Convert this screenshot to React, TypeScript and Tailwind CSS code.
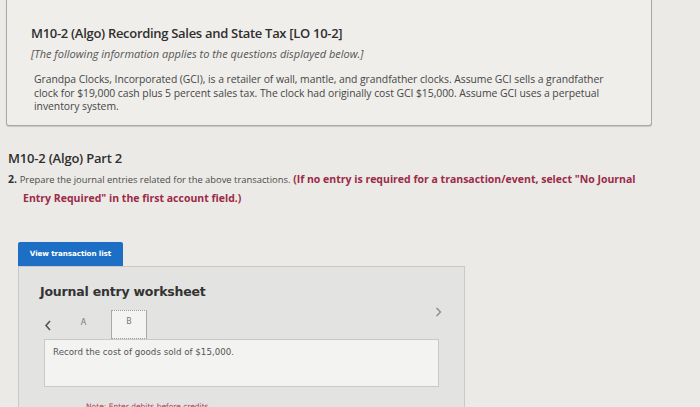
import React from "react";

const sans = "font-['Open_Sans','Liberation_Sans',sans-serif]";
const verdana = "font-['DejaVu_Sans','Liberation_Sans',sans-serif]";

const App: React.FC = () => {
  return (
    <div className={`w-[700px] h-[407px] overflow-hidden bg-[#ebeae7] text-[#3f3f3f] ${sans}`}>
      {/* intro box */}
      <div className="ml-[6px] w-[646px] h-[126px] border border-t-0 border-[#a8a8a6] rounded-b-[3px] bg-[#efeeeb] pl-[24px] pt-[24px] shadow-[0_1px_1px_rgba(0,0,0,0.15)]">
        <h1 className="text-[13px] leading-[18px] font-semibold text-[#2f2f2f] tracking-[-0.3px]">
          M10-2 (Algo) Recording Sales and State Tax [LO 10-2]
        </h1>
        <p className="mt-[5px] text-[11px] leading-[14px] italic text-[#555]">
          [The following information applies to the questions displayed below.]
        </p>
        <p className="mt-[12px] pl-[3px] text-[10.4px] leading-[13.5px] tracking-[-0.05px] text-[#464646] whitespace-nowrap">
          Grandpa Clocks, Incorporated (GCI), is a retailer of wall, mantle, and grandfather clocks. Assume GCI sells a grandfather
          <br />
          clock for $19,000 cash plus 5 percent sales tax. The clock had originally cost GCI $15,000. Assume GCI uses a perpetual
          <br />
          inventory system.
        </p>
      </div>

      {/* part 2 */}
      <div className="pl-[8px] pt-[24px]">
        <h2 className="text-[13px] leading-[16px] font-semibold text-[#2f2f2f] tracking-[-0.2px]">
          M10-2 (Algo) Part 2
        </h2>
        <div className="mt-[4px] text-[10.5px] leading-[18px] text-[#4a4a4a] whitespace-nowrap">
          <div>
            <span className="font-bold text-[#333]">2.</span>{" "}
            <span className="text-[9.4px]">Prepare the journal entries related for the above transactions.</span>{" "}
            <span className="font-bold text-[#9c2a48]">
              (If no entry is required for a transaction/event, select "No Journal
            </span>
          </div>
          <div className="pl-[15px] font-bold text-[#9c2a48]">Entry Required" in the first account field.)</div>
        </div>
      </div>

      {/* worksheet */}
      <div className="pl-[18px] pt-[31px]">
        <button className={`w-[105px] h-[24px] rounded-t-[2px] bg-[#1d6fc6] text-white text-[7.2px] font-bold tracking-[-0.1px] ${verdana}`}>
          View transaction list
        </button>
        <div className={`w-[447px] h-[160px] border border-[#c9c9c7] bg-[#e3e3e1] ${verdana}`}>
          <div className="pl-[21px] pt-[17px] text-[12.5px] leading-[16px] font-bold text-[#333] tracking-[-0.2px]">
            Journal entry worksheet
          </div>
          <div className="mt-[7px] ml-[25px] mr-[22px] flex items-end">
            <span className="w-[12px] pb-[8px] text-[#555]">
              <svg width="8" height="11" viewBox="0 0 8 11" fill="none" stroke="#555" strokeWidth="1.6">
                <path d="M6 1 L2 5.5 L6 10" />
              </svg>
            </span>
            <span className="w-[55px] pb-[10px] text-center text-[8px] text-[#777]">A</span>
            <span className="w-[36px] h-[29px] border border-dotted border-y-[#999] border-x-[#a9a9a9] [border-left-style:solid] [border-right-style:solid] bg-[#f4f4f2] text-center text-[8px] leading-[22px] text-[#777]">
              B
            </span>
            <span className="ml-auto mb-[22px]">
              <svg width="7" height="10" viewBox="0 0 7 10" fill="none" stroke="#888" strokeWidth="1.3">
                <path d="M1.5 1 L5.5 5 L1.5 9" />
              </svg>
            </span>
          </div>
          <div className="ml-[25px] w-[395px] h-[48px] border border-[#c9c9c7] bg-[#f3f3f1] pl-[8px] pt-[6px] text-[8.7px] leading-[12px] text-[#555]">
            Record the cost of goods sold of $15,000.
          </div>
          <div className="mt-[15px] pl-[67px] text-[7.5px] leading-[10px] text-[#b04050]">
            Note: Enter debits before credits.
          </div>
        </div>
      </div>
    </div>
  );
};

export default App;
